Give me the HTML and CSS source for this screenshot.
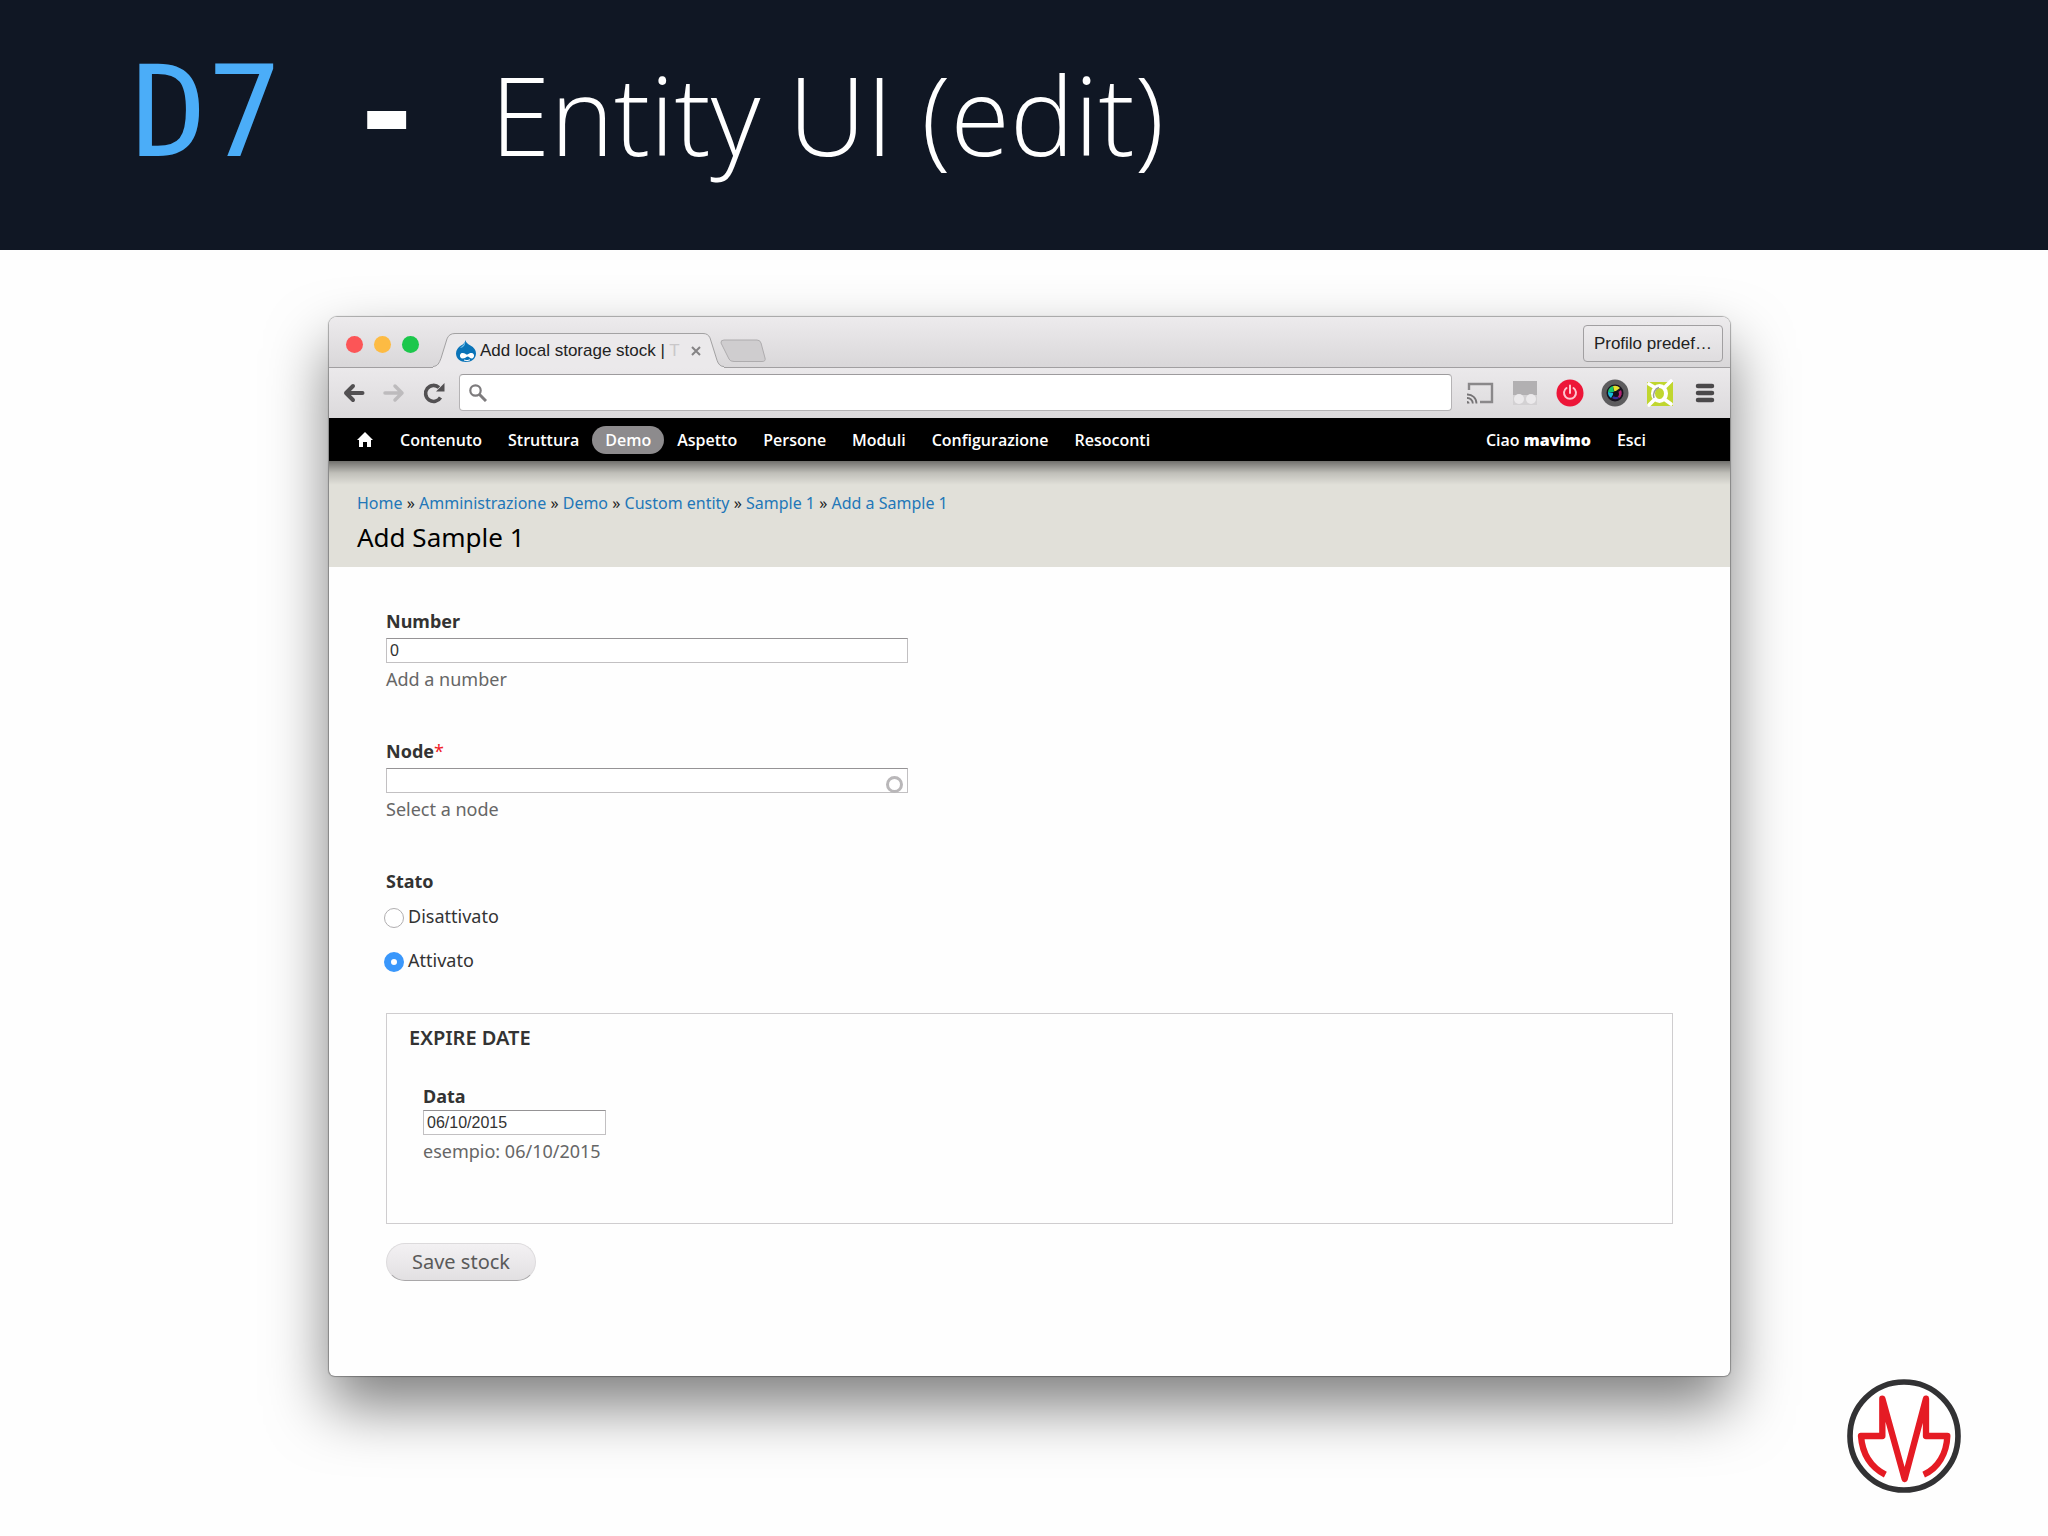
FILE: index.html
```html
<!DOCTYPE html>
<html lang="it">
<head>
<meta charset="utf-8">
<title>D7 - Entity UI (edit)</title>
<link rel="stylesheet" href="styles.css">
</head>
<body>
<div class="slide">
  <header class="slide-header">
    <h1 class="slide-title">
      <span class="version">D7</span>
      <span class="dash">-</span>
      <span class="topic">Entity UI (edit)</span>
    </h1>
  </header>

  <main class="stage">
    <section class="window">
      <div class="tab-strip">
        <div class="lights"><span class="light close"></span><span class="light minimise"></span><span class="light zoom"></span></div>
        <div class="tab">
          <svg class="tab-shape" viewBox="0 0 291 36" preserveAspectRatio="none" aria-hidden="true">
            <path d="M0 36V34.500C5 34 6 31 8 26L14 6Q16 .5 22 .5H270Q275 .5 277 5L284 28Q286 34.500 291 34.500V36Z" fill="#ebe9eb"/>
            <path d="M0 34.500C5 34 6 31 8 26L14 6Q16 .5 22 .5H270Q275 .5 277 5L284 28Q286 34.500 291 34.500" fill="none" stroke="#a19fa1"/>
          </svg>
          <svg class="favicon" viewBox="0 0 20 22" aria-hidden="true">
            <path d="M9.500 0C10 3 12 4 14.500 5.500 18 7.500 20 10 20 13.500 20 18.500 15.500 22 10 22S0 18.500 0 13.500C0 10 2 7.500 5 5.500 7.500 4 9 3 9.500 0Z" fill="#0a74b8"/>
            <path d="M9 1C9 4 6 6 4 8 7 8 10 5 9 1Z" fill="#6fc0ec"/>
            <path d="M6 13C9 12.500 10 15 11.500 14.500 13 13.500 15 12.500 17 13.500 19 15 18 18 16 18.500 14 18.500 13 16.500 11.500 16.500 10 17 9 18.500 6.500 18.500 3 18 3.500 13.500 6 13Z" fill="#fff"/>
            <path d="M8 20Q11 21.500 14 19.800" fill="none" stroke="#fff"/>
          </svg>
          <span class="tab-title">Add local storage stock | <span class="faded">T</span></span>
          <button class="tab-close" type="button" aria-label="Chiudi scheda"><svg viewBox="0 0 10 10"><path d="M1 1 9 9M9 1 1 9" stroke="#858385" stroke-width="2" fill="none"/></svg></button>
        </div>
        <button class="new-tab" type="button" aria-label="Nuova scheda"><svg viewBox="0 0 46 24"><path d="M4 1H37Q40 1 41 4L45 19Q46 22.500 42 22.500H14Q10 22.500 9 20L1 4Q.5 1 4 1Z" fill="#cfcdcf" stroke="#aeacae"/></svg></button>
        <button class="profile" type="button">Profilo predef…</button>
      </div>

      <div class="toolbar">
        <div class="history">
          <button class="icon-btn" type="button" aria-label="Indietro"><svg viewBox="0 0 22 22"><path d="M19.500 11H3M10 4 3 11l7 7" fill="none" stroke="#525052" stroke-width="4" stroke-linecap="round" stroke-linejoin="round"/></svg></button>
          <button class="icon-btn" type="button" aria-label="Avanti"><svg viewBox="0 0 22 22"><path d="M2 11H18M12 4 19 11l-7 7" fill="none" stroke="#bdbbbd" stroke-width="3.500" stroke-linecap="round" stroke-linejoin="round"/></svg></button>
          <button class="icon-btn" type="button" aria-label="Ricarica"><svg viewBox="0 0 22 22"><path d="M16 5.500A8 8 0 1 0 17.500 15.500" fill="none" stroke="#525052" stroke-width="3.600"/><path d="M21.500 1V9.500H13Z" fill="#525052"/></svg></button>
        </div>
        <label class="omnibox">
          <svg viewBox="0 0 18 18" aria-hidden="true"><circle cx="6.500" cy="6.500" r="5.200" fill="none" stroke="#7d7b7d" stroke-width="2.200"/><path d="M10.500 10.500 17 17" stroke="#7d7b7d" stroke-width="3"/></svg>
          <input type="text" aria-label="Indirizzo">
        </label>
        <div class="extensions">
          <button class="ext" type="button" aria-label="Trasmetti"><svg viewBox="0 0 28 28"><path d="M3 11V5H26V23H14" fill="none" stroke="#8a888a" stroke-width="2.400"/><path d="M1 15.500A9 9 0 0 1 10.500 24.500M1 19A5.500 5.500 0 0 1 6.800 24.500" fill="none" stroke="#757375" stroke-width="1.800"/><path d="M1 22A2.500 2.500 0 0 1 3.500 24.500H1Z" fill="#757375"/></svg></button>
          <button class="ext" type="button" aria-label="Estensione"><svg viewBox="0 0 28 28"><rect x="2" y="2" width="24" height="24" fill="#d3d1d3"/><path d="M2 2H26V16H2Z" fill="#b2b0b2"/><circle cx="8" cy="20" r="5" fill="#ebe9eb"/><circle cx="20" cy="20" r="5" fill="#ebe9eb"/></svg></button>
          <button class="ext" type="button" aria-label="Interruttore"><svg viewBox="0 0 28 28"><circle cx="14" cy="14" r="13.500" fill="#ed1538"/><path d="M10.500 9A6 6 0 1 0 17.500 9M14 6.500V14" fill="none" stroke="#ffc5d0" stroke-width="2" stroke-linecap="round"/></svg></button>
          <button class="ext" type="button" aria-label="Fotocamera"><svg viewBox="0 0 28 28"><circle cx="14" cy="14" r="13.500" fill="#5d5c5e"/><circle cx="14" cy="14" r="8.500" fill="#17121d"/><path d="M7 13A7 7 0 0 1 12 7L13 13Z" fill="#17c66c"/><path d="M12 7A7 7 0 0 1 19 9L13.500 13Z" fill="#e5e12d"/><path d="M7 13A7 7 0 0 0 10 19L13 14Z" fill="#17bce0"/><path d="M20 11A6 6 0 0 1 18 19L14.500 15Z" fill="#b32172"/><path d="M11 19A6 6 0 0 0 18 19L14 16Z" fill="#352a9c"/><circle cx="15" cy="15" r="3" fill="#130d1a"/></svg></button>
          <button class="ext" type="button" aria-label="Cattura"><svg viewBox="0 0 28 28"><rect x="1" y="3" width="26" height="24" fill="#c0d62f"/><ellipse cx="13.500" cy="14.500" rx="6.500" ry="7.500" fill="#c0d62f" stroke="#fff" stroke-width="4"/><path d="M3 5 8 8M19 8 25 2M3 26 8 21M18 20 25 25" stroke="#fff" stroke-width="3.600" stroke-linecap="round"/><path d="M8 19A7 8 0 0 1 13 8.500" fill="none" stroke="#9b9a9b" stroke-width="1.500"/></svg></button>
          <button class="ext" type="button" aria-label="Menu"><svg viewBox="0 0 28 28"><path d="M7 7H21M7 14H21M7 21H21" stroke="#4b494b" stroke-width="4.500" stroke-linecap="round"/></svg></button>
        </div>
      </div>

      <nav class="admin-bar">
        <a class="home" href="#" aria-label="Home"><svg viewBox="0 0 16 15"><path d="M8 0 16 8H14V15H10V10H6V15H2V8H0Z" fill="#fff"/></svg></a>
        <a href="#">Contenuto</a>
        <a href="#">Struttura</a>
        <a href="#" class="active">Demo</a>
        <a href="#">Aspetto</a>
        <a href="#">Persone</a>
        <a href="#">Moduli</a>
        <a href="#">Configurazione</a>
        <a href="#">Resoconti</a>
        <a href="#" class="user">Ciao <strong>mavimo</strong></a>
        <a href="#">Esci</a>
      </nav>

      <div class="branding">
        <div class="breadcrumb"><a href="#">Home</a> » <a href="#">Amministrazione</a> » <a href="#">Demo</a> » <a href="#">Custom entity</a> » <a href="#">Sample 1</a> » <a href="#">Add a Sample 1</a></div>
        <h2 class="page-title">Add Sample 1</h2>
      </div>

      <form class="entity-form">
        <div class="item">
          <label for="number">Number</label>
          <input class="text wide" id="number" type="text" value="0">
          <p class="description">Add a number</p>
        </div>
        <div class="item">
          <label for="node">Node<span class="required">*</span></label>
          <div class="autocomplete wide">
            <input class="text" id="node" type="text">
            <span class="throbber"></span>
          </div>
          <p class="description">Select a node</p>
        </div>
        <div class="radios" role="radiogroup" aria-labelledby="stato">
          <span class="group-label" id="stato">Stato</span>
          <label class="option"><input type="radio" name="stato">Disattivato</label>
          <label class="option"><input type="radio" name="stato" checked>Attivato</label>
        </div>
        <fieldset class="date-group">
          <legend>EXPIRE DATE</legend>
          <div class="date-item">
            <label for="data">Data</label>
            <input class="text" id="data" type="text" value="06/10/2015">
            <p class="description">esempio: 06/10/2015</p>
          </div>
        </fieldset>
        <button class="save" type="button">Save stock</button>
      </form>
    </section>

    <svg class="logo" viewBox="81 57 342 342" role="img" aria-label="Logo">
      <circle cx="252" cy="228" r="162" fill="#fff" stroke="#323234" stroke-width="17"/>
      <path d="M196 344C152 321 127 282 123 228H187V116L254 357L318 116V228H382C380 280 355 325 311 344" fill="none" stroke="#e51b24" stroke-width="19" stroke-linejoin="round"/>
    </svg>
  </main>
</div>
</body>
</html>
```
FILE: styles.css
```css
* { box-sizing: border-box; }

body {
  margin: 0;
  background: #fefefe;
  color: #333;
  font: 18px/24px "Noto Sans", "Open Sans", sans-serif;
}

button { margin: 0; padding: 0; border: 0; background: none; font: inherit; color: inherit; }
svg { display: block; }
a { text-decoration: none; color: inherit; }
p { margin: 0; }

.slide { display: flex; flex-direction: column; min-height: 100vh; }

.slide-header { background: #101724; padding: 33px 131px 55px; }
.slide-title {
  display: flex;
  align-items: baseline;
  gap: 66px;
  margin: 0;
  color: #fff;
  font-weight: 400;
  line-height: 160px;
}
.version, .dash { font-family: "DejaVu Sans Mono", monospace; font-size: 126px; }
.version { color: #4badf8; }
.dash { font-weight: 700; }
.topic { font-family: "Open Sans", sans-serif; font-weight: 300; font-size: 108px; }

.stage {
  flex: 1;
  display: grid;
  grid-template-columns: 329fr 1401fr 318fr;
  align-items: start;
  padding: 67px 0 43px;
}
.window {
  grid-column: 2;
  border-radius: 8px 8px 6px 6px;
  background: #fefefe;
  box-shadow: 0 0 1px 1px rgba(0, 0, 0, .3), 0 30px 60px rgba(0, 0, 0, .5);
  overflow: hidden;
}
.logo { grid-column: 3; align-self: end; justify-self: end; width: 114px; margin-right: 87px; }

/* Browser chrome */
.tab-strip {
  display: flex;
  align-items: flex-end;
  height: 51px;
  padding: 0 7px 0 17px;
  background: linear-gradient(#edebed, #d9d7d9);
  border-bottom: 1px solid #a19fa1;
  font: 17px/24px "Liberation Sans", Arial, sans-serif;
  color: #222;
}
.lights { display: flex; gap: 11px; margin-bottom: 14px; }
.light { width: 17px; height: 17px; border-radius: 50%; }
.close { background: #fc5557; }
.minimise { background: #fdbb43; }
.zoom { background: #1cc74c; }

.tab {
  position: relative;
  display: flex;
  align-items: center;
  width: 291px;
  height: 35px;
  margin: 0 0 -1px 14px;
  padding: 0 23px;
}
.tab-shape { position: absolute; inset: 0; width: 100%; height: 100%; }
.favicon { position: relative; width: 20px; height: 22px; margin-right: 4px; flex: none; }
.tab-title { position: relative; flex: 1; white-space: nowrap; }
.faded { color: #c9c7c9; }
.tab-close { position: relative; width: 10px; }
.new-tab { width: 46px; margin: 0 auto 4px -4px; }
.profile {
  height: 37px;
  padding: 0 10px;
  margin-bottom: 5px;
  border: 1px solid #a19fa1;
  border-radius: 4px;
  background: linear-gradient(#edebed, #dfdddf);
}

.toolbar {
  display: flex;
  align-items: center;
  gap: 14px;
  height: 50px;
  padding: 0 11px 1px 14px;
  background: linear-gradient(#ebe9eb, #dcdadc);
}
.history { display: flex; gap: 18px; }
.icon-btn { width: 22px; }
.omnibox {
  flex: 1;
  display: flex;
  align-items: center;
  gap: 8px;
  height: 37px;
  padding: 0 9px;
  border: 1px solid #b5b3b5;
  border-top-color: #9d9b9d;
  border-radius: 4px;
  background: #fff;
}
.omnibox svg { width: 18px; }
.omnibox input { flex: 1; border: 0; outline: 0; background: none; font: 17px "Liberation Sans", Arial, sans-serif; }
.extensions { display: flex; gap: 17px; }
.ext { width: 28px; }

/* Administration toolbar */
.admin-bar {
  display: flex;
  align-items: center;
  height: 43px;
  padding: 0 71px 0 14px;
  background: #000;
  color: #fff;
  font: 600 16px/28px "Open Sans", "Noto Sans", sans-serif;
}
.admin-bar a { padding: 0 13px; border-radius: 14px; white-space: nowrap; }
.admin-bar .home { width: 44px; padding: 0 14px; }
.admin-bar .active { background: #8d8b8d; }
.admin-bar .user { margin-left: auto; }

.branding {
  padding: 30px 28px 12px;
  background: linear-gradient(rgba(0, 0, 0, .5), rgba(0, 0, 0, .15) 12px, transparent 24px), #e1e0d9;
}
.breadcrumb { font-size: 16px; color: #222; }
.breadcrumb a { color: #2277b8; }
.page-title { margin: 4px 0 0; color: #000; font-size: 26px; line-height: 36px; font-weight: 400; }

/* Entity form */
.entity-form { padding: 42px 57px 95px; }
.item { display: flex; flex-direction: column; margin-bottom: 48px; }
.item label, .group-label, .date-item label { font-weight: 700; }
.wide { width: 522px; max-width: 100%; }
.text {
  display: block;
  height: 25px;
  margin: 5px 0 4px;
  padding: 0 3px;
  border: 1px solid #c2c0c2;
  border-top-color: #959395;
  background: #fff;
  color: #333;
  font: 16px "Liberation Sans", Arial, sans-serif;
}
.description { color: #666; }
.required { color: #f01c28; font-weight: 400; }
.autocomplete { position: relative; }
.autocomplete .text { width: 100%; }
.throbber {
  position: absolute;
  right: 5px;
  bottom: 4px;
  width: 17px;
  height: 17px;
  border: 3px solid #b9b7b9;
  border-radius: 50%;
}

.radios { display: flex; flex-direction: column; align-items: flex-start; margin-bottom: 41px; }
.option { display: flex; align-items: center; gap: 4px; margin: 11px 0 0 -2px; }
.option + .option { margin-top: 20px; }
.option input {
  appearance: none;
  width: 20px;
  height: 20px;
  margin: 4px 0 0;
  border: 1px solid #b0aeb0;
  border-radius: 50%;
  background: #fff;
}
.option input:checked { border: 7px solid #3a97fb; }

.date-group { margin: 0; padding: 11px 22px 60px; border: 1px solid #cfcdcf; }
.date-group legend { float: left; width: 100%; padding: 0; font-size: 20px; line-height: 26px; font-weight: 600; }
.date-item { clear: both; padding: 33px 0 0 14px; }
.date-item label { display: block; }
.date-item .text { width: 183px; margin-top: 2px; }

.save {
  display: block;
  height: 38px;
  margin-top: 19px;
  padding: 0 25px;
  border: 1px solid #dcdadc;
  border-bottom-color: #a9a7a9;
  border-radius: 19px;
  background: linear-gradient(#f3f1f3, #e2e0e2);
  color: #5a5a5a;
  font-size: 20px;
}
```
